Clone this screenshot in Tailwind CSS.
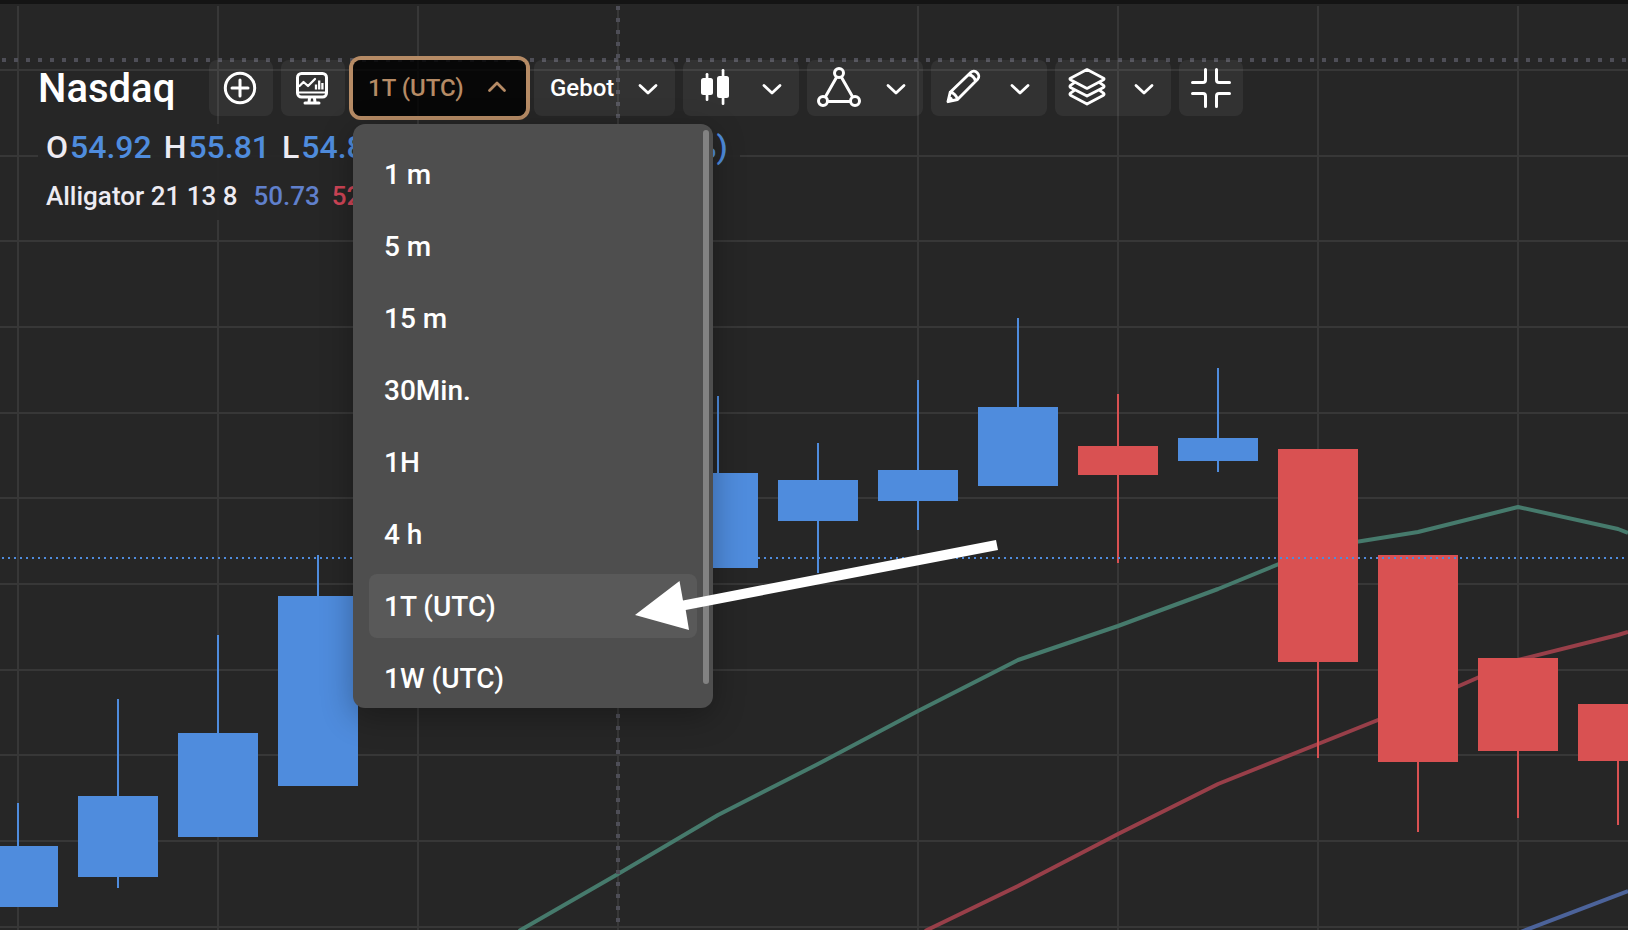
<!DOCTYPE html>
<html lang="de">
<head>
<meta charset="utf-8">
<meta name="viewport" content="width=device-width, initial-scale=1">
<title>Nasdaq</title>
<script src="https://cdn.jsdelivr.net/npm/@tailwindcss/browser@4"></script>
</head>
<body class="bg-[#262626] font-['Roboto','Liberation_Sans',sans-serif] text-white">
<main class="relative min-h-screen overflow-hidden">

  <!-- Price chart -->
  <svg class="absolute inset-0 h-full w-full" aria-hidden="true">
    <g stroke="#373737" stroke-width="2">
      <path d="M18 6V2000M218 6V2000M418 6V2000M618 6V2000M918 6V2000M1118 6V2000M1318 6V2000M1518 6V2000"/>
      <path d="M0 70H4000M0 156H4000M0 241H4000M0 327H4000M0 413H4000M0 498H4000M0 584H4000M0 670H4000M0 755H4000M0 841H4000M0 927H4000"/>
    </g>
    <g fill="none" stroke-width="4" stroke-linejoin="round">
      <path stroke="#467a6c" d="M519 931L618 874L718 815L818 764L918 711L1018 660L1118 626L1218 589L1318 548L1418 532L1518 507L1618 529L1628 533"/>
      <path stroke="#983f49" d="M925 931L1018 886L1118 834L1218 784L1318 744L1418 704L1518 660L1618 635L1628 632"/>
      <path stroke="#4c639a" d="M1518 933L1628 891"/>
    </g>
    <g fill="#4f8cdd">
      <path d="M17 803h2v50h-2zM0 846h58v61H0z"/>
      <path d="M117 699h2v189h-2zM78 796h80v81H78z"/>
      <path d="M217 635h2v110h-2zM178 733h80v104h-80z"/>
      <path d="M317 555h2v50h-2zM278 596h80v190h-80z"/>
      <path d="M717 396h2v90h-2zM678 473h80v95h-80z"/>
      <path d="M817 443h2v130h-2zM778 480h80v41h-80z"/>
      <path d="M917 380h2v150h-2zM878 470h80v31h-80z"/>
      <path d="M1017 318h2v100h-2zM978 407h80v79h-80z"/>
      <path d="M1217 368h2v104h-2zM1178 438h80v23h-80z"/>
    </g>
    <g fill="#d95152">
      <path d="M1117 394h2v169h-2zM1078 446h80v29h-80z"/>
      <path d="M1317 600h2v158h-2zM1278 449h80v213h-80z"/>
      <path d="M1417 700h2v132h-2zM1378 555h80v207h-80z"/>
      <path d="M1517 700h2v118h-2zM1478 658h80v93h-80z"/>
      <path d="M1617 720h2v105h-2zM1578 704h80v57h-80z"/>
    </g>
    <path d="M2 558H4000" stroke="#4f8cdd" stroke-width="2" stroke-dasharray="2 4"/>
    <g stroke="#4e4e57" stroke-width="4" stroke-dasharray="4 8">
      <path d="M2 60H4000"/>
      <path d="M618 6V2000"/>
    </g>
  </svg>

  <div class="relative h-1 bg-[#141414]"></div>

  <!-- Toolbar -->
  <header class="relative z-10 mt-14 flex h-14 items-center gap-2 pl-[38px]">
    <h1 class="w-[163px] shrink-0 pt-0.5 text-[40px] leading-14 font-medium">Nasdaq</h1>

    <button type="button" aria-label="Hinzufügen" class="flex h-14 w-16 shrink-0 items-center justify-center rounded-lg bg-white/6 pr-0.5">
      <svg width="34" height="34" viewBox="0 0 34 34" fill="none" stroke="#fff" stroke-width="3" stroke-linecap="round"><circle cx="17" cy="17" r="14.7"/><path d="M17 9V25M9 17H25"/></svg>
    </button>
    <button type="button" aria-label="Chartansicht" class="flex h-14 w-16 shrink-0 items-center justify-center rounded-lg bg-white/6 pr-0.5">
      <svg width="32" height="34" viewBox="0 0 32 34" fill="none" stroke="#fff" stroke-linecap="round" stroke-linejoin="round"><rect x="1.5" y="2.5" width="29" height="23.5" rx="4" stroke-width="3"/><path stroke-width="2" d="M1.5 21.500H30.5"/><path stroke-width="2.300" d="M3.500 15L7.500 11L12 15L19 8"/><path stroke-width="2.300" stroke-linecap="butt" d="M20 18.500V13.500M23.200 18.500V9.500M26.400 18.500V12"/><path stroke-width="3" d="M13.500 27.500L13 31M18.500 27.500L19 31M9 32H23"/></svg>
    </button>

    <div class="relative shrink-0">
      <button type="button" aria-haspopup="listbox" aria-expanded="true" aria-controls="intervals" class="flex h-14 w-[173px] items-center justify-between rounded-lg bg-black/80 pr-[13px] pl-[15px] text-2xl font-medium text-[#b68b65] ring-4 ring-[#b68b65]">
        1T (UTC)
        <svg width="32" height="32" viewBox="0 0 32 32" fill="none" stroke="currentColor" stroke-width="2.8" stroke-linecap="round" stroke-linejoin="round"><path d="M8.500 18.500L16 11L23.500 18.500"/></svg>
      </button>
      <div class="absolute top-16 left-0 h-[584px] w-[360px] overflow-hidden rounded-xl bg-[#4e4e4e] shadow-[0_8px_32px_rgba(0,0,0,0.3)]">
        <ul id="intervals" role="listbox" aria-label="Intervall" class="flex flex-col gap-2 px-4 pt-[18px] text-[28px] leading-[62px] font-medium">
          <li role="option" aria-selected="false" class="rounded-lg px-[15px] pt-0.5">1 m</li>
          <li role="option" aria-selected="false" class="rounded-lg px-[15px] pt-0.5">5 m</li>
          <li role="option" aria-selected="false" class="rounded-lg px-[15px] pt-0.5">15 m</li>
          <li role="option" aria-selected="false" class="rounded-lg px-[15px] pt-0.5">30Min.</li>
          <li role="option" aria-selected="false" class="rounded-lg px-[15px] pt-0.5">1H</li>
          <li role="option" aria-selected="false" class="rounded-lg px-[15px] pt-0.5">4 h</li>
          <li role="option" aria-selected="true" class="rounded-lg bg-[#595959] px-[15px] pt-0.5">1T (UTC)</li>
          <li role="option" aria-selected="false" class="rounded-lg px-[15px] pt-0.5">1W (UTC)</li>
        </ul>
        <div class="absolute top-1.5 right-1 h-[554px] w-1.5 rounded-full bg-[#828282]"></div>
      </div>
    </div>

    <button type="button" aria-haspopup="listbox" class="flex h-14 w-[141px] shrink-0 items-center justify-between rounded-lg bg-white/6 pr-[11px] pl-4 text-2xl font-medium">
      Gebot
      <svg width="32" height="32" viewBox="0 0 32 32" fill="none" stroke="currentColor" stroke-width="2.8" stroke-linecap="round" stroke-linejoin="round"><path d="M8 13.500L16 21L24 13.500"/></svg>
    </button>

    <button type="button" aria-label="Charttyp" class="flex h-14 w-29 shrink-0 items-center justify-between rounded-lg bg-white/6 pr-[11px] pl-3">
      <svg width="40" height="40" viewBox="0 0 40 40" fill="#fff"><rect x="6" y="10" width="12" height="17" rx="2.500"/><rect x="10.700" y="5" width="2.700" height="28" rx="1.300"/><rect x="22" y="8" width="12" height="22" rx="2.500"/><rect x="26.700" y="1" width="2.700" height="36" rx="1.300"/></svg>
      <svg width="32" height="32" viewBox="0 0 32 32" fill="none" stroke="currentColor" stroke-width="2.8" stroke-linecap="round" stroke-linejoin="round"><path d="M8 13.500L16 21L24 13.500"/></svg>
    </button>
    <button type="button" aria-label="Formen" class="flex h-14 w-29 shrink-0 items-center justify-between rounded-lg bg-white/6 pr-[11px] pl-2">
      <svg width="48" height="48" viewBox="0 0 48 48" fill="none" stroke="#fff" stroke-width="3"><circle cx="24" cy="9" r="4.500"/><circle cx="8" cy="37" r="4.500"/><circle cx="40" cy="37" r="4.500"/><path d="M21.700 13L10.300 33M26.300 13L37.700 33M12.600 37.500H35.400"/></svg>
      <svg width="32" height="32" viewBox="0 0 32 32" fill="none" stroke="currentColor" stroke-width="2.8" stroke-linecap="round" stroke-linejoin="round"><path d="M8 13.500L16 21L24 13.500"/></svg>
    </button>
    <button type="button" aria-label="Zeichnen" class="flex h-14 w-29 shrink-0 items-center justify-between rounded-lg bg-white/6 pr-[11px] pl-3">
      <svg width="40" height="40" viewBox="0 0 40 40" fill="none" stroke="#fff" stroke-width="2.900" stroke-linecap="round" stroke-linejoin="round"><path d="M5 33.700L7.200 24.300L27.700 4.500C29.500 2.800 32.300 2.900 34.200 4.700C36.100 6.600 36.300 9.500 34.600 11.300L14.500 31.500ZM7.200 24.300C10.500 24.500 14 28 14.500 31.500M25.500 6.800C29 6.800 32.300 10 32.400 13.500M6 29.500C7.500 30 8.700 31.200 9 32.600"/></svg>
      <svg width="32" height="32" viewBox="0 0 32 32" fill="none" stroke="currentColor" stroke-width="2.8" stroke-linecap="round" stroke-linejoin="round"><path d="M8 13.500L16 21L24 13.500"/></svg>
    </button>
    <button type="button" aria-label="Ebenen" class="flex h-14 w-29 shrink-0 items-center justify-between rounded-lg bg-white/6 pr-[11px] pl-3">
      <svg width="40" height="40" viewBox="0 0 40 40" fill="none" stroke="#fff" stroke-width="2.800" stroke-linecap="round" stroke-linejoin="round"><path d="M20 1.600L36.500 10.300Q37.700 11 36.500 11.700L20 20.400L3.500 11.700Q2.300 11 3.500 10.300Z"/><path d="M7 14.800L3.500 17.400Q2.300 18.400 3.500 19.400L20 28L36.500 19.400Q37.700 18.400 36.500 17.400L33 14.800"/><path d="M7 22.600L3.500 25.200Q2.300 26.200 3.500 27.200L20 36L36.500 27.200Q37.700 26.200 36.500 25.200L33 22.600"/></svg>
      <svg width="32" height="32" viewBox="0 0 32 32" fill="none" stroke="currentColor" stroke-width="2.8" stroke-linecap="round" stroke-linejoin="round"><path d="M8 13.500L16 21L24 13.500"/></svg>
    </button>
    <button type="button" aria-label="Vollbild beenden" class="flex h-14 w-16 shrink-0 items-center justify-center rounded-lg bg-white/6">
      <svg width="40" height="40" viewBox="0 0 40 40" fill="none" stroke="#fff" stroke-width="3" stroke-linecap="round" stroke-linejoin="round"><path d="M14.500 1.500V12Q14.500 14.500 12 14.500H1.500M25.500 1.500V12Q25.500 14.500 28 14.500H38.500M14.500 38.500V28Q14.500 25.500 12 25.500H1.500M25.500 38.500V28Q25.500 25.500 28 25.500H38.500"/></svg>
    </button>
  </header>

  <!-- Legend -->
  <section class="relative mt-2 ml-[18px] w-fit pl-5 font-medium text-[#edebf2]">
    <div class="flex h-12 w-fit items-center gap-3 bg-[#262626]/95 pr-3 pb-0.5 pl-2 text-[32px] leading-9 whitespace-nowrap">
      <span class="flex gap-0.5">O<span class="text-[#4f8cdd]">54.92</span></span>
      <span class="flex gap-0.5">H<span class="text-[#4f8cdd]">55.81</span></span>
      <span class="flex gap-0.5">L<span class="text-[#4f8cdd]">54.88</span></span>
      <span class="flex gap-0.5">C<span class="text-[#4f8cdd]">55.32</span></span>
      <span class="text-[#4f8cdd]">+0.40 (+0.73%)</span>
    </div>
    <div class="flex h-12 w-fit items-center gap-3 bg-[#262626]/95 pr-3 pl-2 text-[26px] leading-9 whitespace-nowrap">
      <span class="mr-1">Alligator 21 13 8</span>
      <span class="text-[#6080cc]">50.73</span>
      <span class="text-[#d04557]">52.41</span>
    </div>
  </section>

  <!-- Pointer arrow -->
  <svg class="pointer-events-none absolute inset-0 z-20 h-full w-full" aria-hidden="true">
    <path fill="#fff" d="M635 615L679.500 581L683 600.500L996 540L998 550L685.700 610L689 630Z"/>
  </svg>
</main>
</body>
</html>
